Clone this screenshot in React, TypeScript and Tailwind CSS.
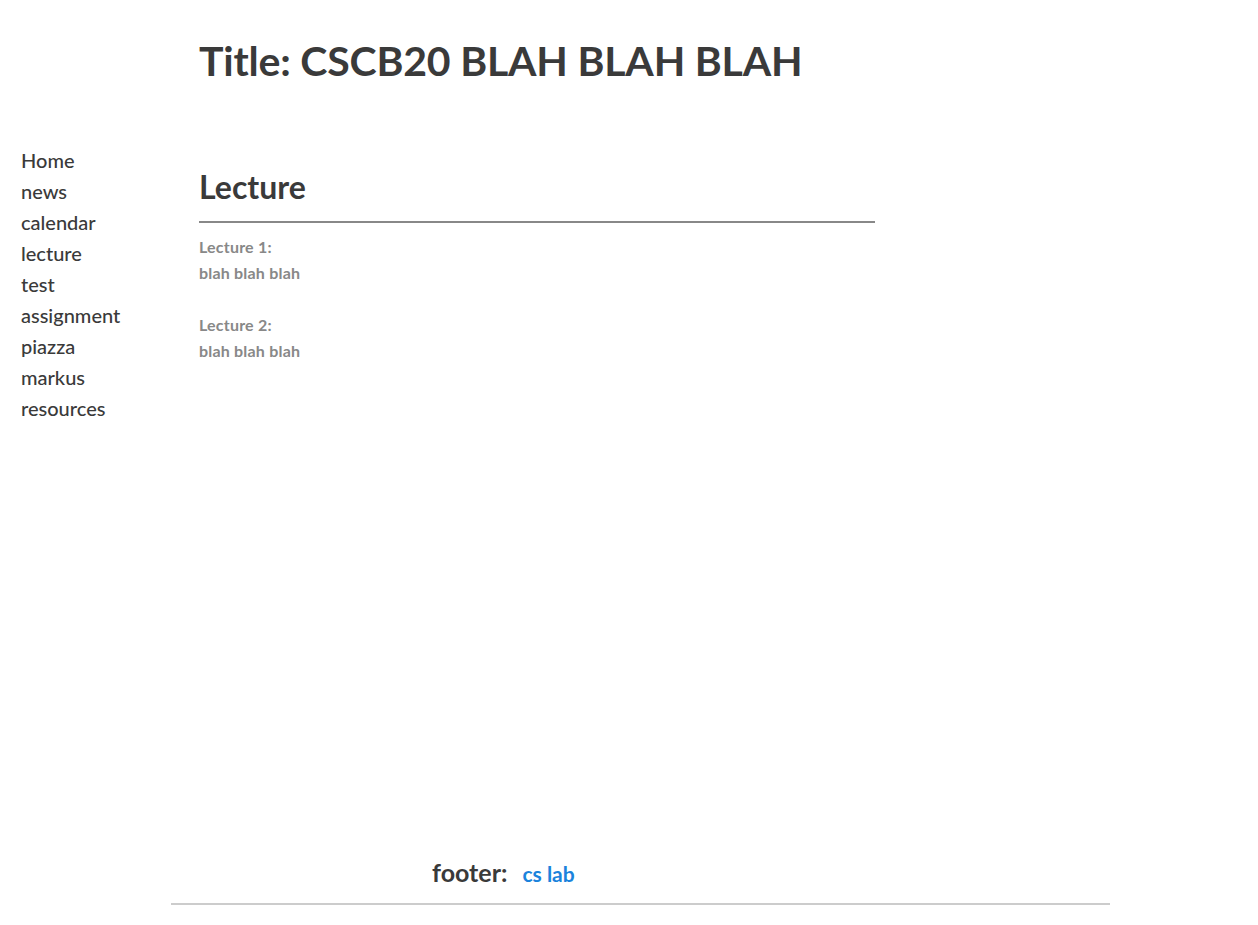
const navItems = ['Home', 'news', 'calendar', 'lecture', 'test', 'assignment', 'piazza', 'markus', 'resources']

const lectures = [
  { title: 'Lecture 1:', body: 'blah blah blah' },
  { title: 'Lecture 2:', body: 'blah blah blah' },
]

export default function App() {
  return (
    <div className="min-h-screen flex flex-col bg-white text-[#3a3a3a] font-['Lato','Open_Sans',sans-serif]">
      {/* header */}
      <header className="pl-[199px] pt-[36px]">
        <h1 className="text-[41px] font-bold leading-[50px] tracking-[-0.2px]">Title: CSCB20 BLAH BLAH BLAH</h1>
      </header>

      <div className="flex mt-[53px]">
        {/* side nav */}
        <nav className="w-[199px] pl-[21px] pt-[6px] flex flex-col">
          {navItems.map((item) => (
            <a key={item} href="#" className="text-[20px] font-medium leading-[31px]">
              {item}
            </a>
          ))}
        </nav>

        {/* content */}
        <main className="w-[676px] pt-[28px]">
          <h2 className="text-[32px] font-bold leading-[40px]">Lecture</h2>
          <hr className="mt-[14px] border-0 h-[2px] bg-[#888]" />
          <div className="pt-[11px] flex flex-col gap-[26px]">
            {lectures.map((l) => (
              <div key={l.title} className="text-[16px] font-bold leading-[26px] text-[#888] tracking-[0.2px]">
                <div>{l.title}</div>
                <div>{l.body}</div>
              </div>
            ))}
          </div>
        </main>
      </div>

      {/* footer */}
      <footer className="mt-auto pb-[20px]">
        <div className="flex items-baseline pl-[432px] pb-[12px]">
          <span className="text-[25px] font-bold">footer:</span>
          <a href="#" className="ml-[15px] text-[21px] font-bold text-[#1b83dc]">cs lab</a>
        </div>
        <div className="ml-[171px] w-[939px] h-[2px] bg-[#ccc]" />
      </footer>
    </div>
  )
}
